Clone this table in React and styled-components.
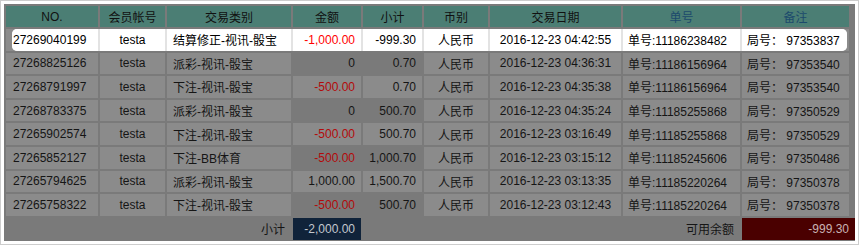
import React from 'react';
import styled, { createGlobalStyle } from 'styled-components';

const GlobalStyle = createGlobalStyle`
  body {
    margin: 0;
    background: #fff;
    font-family: 'Liberation Sans', 'Noto Sans CJK SC', sans-serif;
  }
`;

const COLS = '92px 65px 124px 68px 59px 64px 131px 117px 107px';
const LIT_COLS = '86px 65px 124px 68px 59px 64px 131px 117px 105px';

const Frame = styled.div`
  box-sizing: border-box;
  width: 859px;
  height: 245px;
  border: 1px solid #cdcdcd;
  padding: 3px;
`;

const Panel = styled.div`
  box-sizing: border-box;
  height: 100%;
  padding: 2px 0 0 2px;
  background: #7a7a7a;
  font-size: 12px;
  color: #151515;
`;

const Grid = styled.div`
  display: grid;
  grid-template-columns: ${COLS};
  grid-template-rows: 21px repeat(8, 21.6px);
  gap: 2px;
`;

const HeadCell = styled.div`
  display: flex;
  align-items: center;
  justify-content: center;
  background: #4b7e74;
  color: ${({ $blue }) => ($blue ? '#1c4a6c' : '#111')};
`;

const Cell = styled.div`
  display: flex;
  align-items: center;
  justify-content: ${({ $align }) => ($align === 'right' ? 'flex-end' : $align === 'center' ? 'center' : 'flex-start')};
  padding: 0 ${({ $pad }) => $pad || 6}px;
  white-space: nowrap;
  background: ${({ $tone }) => ($tone === 'lit' ? '#fff' : $tone === 'dark' ? 'transparent' : '#8b8b8b')};
  color: ${({ $red, $tone }) => ($red ? ($tone === 'lit' ? '#f00' : '#b30a0a') : $tone === 'lit' ? '#000' : '#151515')};
`;

const HighlightRow = styled.div`
  grid-column: 1 / -1;
  display: flex;
  background: #8b8b8b;
`;

const Spotlight = styled.div`
  flex: 1;
  margin: 0 2px 0 6px;
  border-radius: 5px;
  overflow: hidden;
  display: grid;
  grid-template-columns: ${LIT_COLS};
  gap: 2px;
  background: #e3e3e3;
`;

const Footer = styled.div`
  display: grid;
  grid-template-columns: 285px 68px 377px 1fr;
  gap: 2px;
  height: 22px;
  margin-top: 2px;
`;

const FootLabel = styled.div`
  display: flex;
  align-items: center;
  justify-content: flex-end;
  padding-right: 6px;
  color: #151515;
`;

const FootValue = styled.div`
  display: flex;
  align-items: center;
  justify-content: flex-end;
  padding-right: 6px;
  background: ${({ $kind }) => ($kind === 'balance' ? '#4a0000' : '#10233a')};
  color: ${({ $kind }) => ($kind === 'balance' ? '#c9b3b3' : '#c3c8ce')};
`;

const heads = ['NO.', '会员帐号', '交易类别', '金额', '小计', '币别', '交易日期', '单号', '备注'];

const rows = [
  ['27269040199', '结算修正-视讯-骰宝', '-1,000.00', '-999.30', '2016-12-23 04:42:55', '11186238482', '97353837'],
  ['27268825126', '派彩-视讯-骰宝', '0', '0.70', '2016-12-23 04:36:31', '11186156964', '97353540'],
  ['27268791997', '下注-视讯-骰宝', '-500.00', '0.70', '2016-12-23 04:35:38', '11186156964', '97353540'],
  ['27268783375', '派彩-视讯-骰宝', '0', '500.70', '2016-12-23 04:35:24', '11185255868', '97350529'],
  ['27265902574', '下注-视讯-骰宝', '-500.00', '500.70', '2016-12-23 03:16:49', '11185255868', '97350529'],
  ['27265852127', '下注-BB体育', '-500.00', '1,000.70', '2016-12-23 03:15:12', '11185245606', '97350486'],
  ['27265794625', '派彩-视讯-骰宝', '1,000.00', '1,500.70', '2016-12-23 03:13:35', '11185220264', '97350378'],
  ['27265758322', '下注-视讯-骰宝', '-500.00', '500.70', '2016-12-23 03:12:43', '11185220264', '97350378'],
];

const RowCells = ({ row, lit, striped }) => {
  const [no, type, amount, subtotal, date, order, round] = row;
  const base = lit ? 'lit' : 'light';
  const money = lit ? 'lit' : striped ? 'dark' : 'light';
  return (
    <>
      <Cell $tone={base} $pad={lit ? 1 : 7}>{no}</Cell>
      <Cell $tone={base} $align="center">testa</Cell>
      <Cell $tone={base}>{type}</Cell>
      <Cell $tone={money} $align="right" $red={amount.startsWith('-')}>{amount}</Cell>
      <Cell $tone={money} $align="right">{subtotal}</Cell>
      <Cell $tone={base} $align="center">人民币</Cell>
      <Cell $tone={base} $align="center">{date}</Cell>
      <Cell $tone={base} $pad={5}>单号:{order}</Cell>
      <Cell $tone={base} $pad={5}>局号： {round}</Cell>
    </>
  );
};

const App = () => (
  <>
    <GlobalStyle />
    <Frame>
      <Panel>
        <Grid>
          {heads.map((h, i) => (
            <HeadCell key={h} $blue={i >= 7}>{h}</HeadCell>
          ))}
          <HighlightRow>
            <Spotlight>
              <RowCells row={rows[0]} lit />
            </Spotlight>
          </HighlightRow>
          {rows.slice(1).map((row, i) => (
            <RowCells key={row[0]} row={row} striped={i % 2 === 0} />
          ))}
        </Grid>
        <Footer>
          <FootLabel>小计</FootLabel>
          <FootValue>-2,000.00</FootValue>
          <FootLabel>可用余额</FootLabel>
          <FootValue $kind="balance">-999.30</FootValue>
        </Footer>
      </Panel>
    </Frame>
  </>
);

export default App;
